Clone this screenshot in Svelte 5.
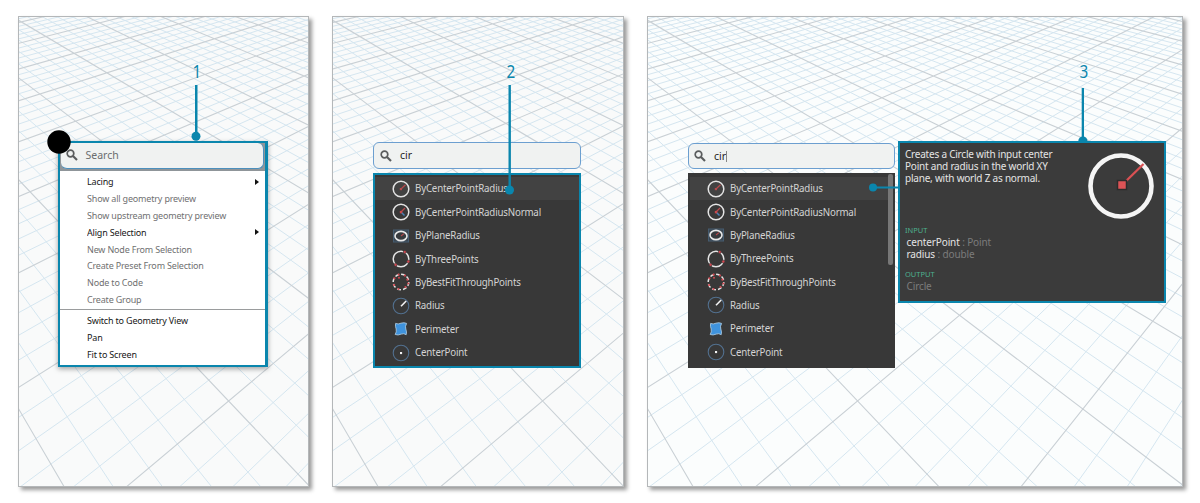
<script>
  // Perspective floor: two families of lines, each meeting at a point on the horizon.
  const horizon = -203, leftX = -347.4, rightX = 910;
  const line = (x, slope) => `M${x} ${horizon}L${(x + 690 * slope).toFixed(1)} ${horizon + 690}`;
  let minor = '', major = '';
  for (let n = -12; n <= 65; n++) {
    const s = n / 5;
    const d = line(leftX, 0.584 + 0.365 * s) + line(rightX, -(0.7955 + 0.394 * s));
    if (n % 5 === 0) major += d; else minor += d;
  }
  const groups = [
    [['Lacing', 1, 1], ['Show all geometry preview', 0, 0], ['Show upstream geometry preview', 0, 0], ['Align Selection', 1, 1],
     ['New Node From Selection', 0, 0], ['Create Preset From Selection', 0, 0], ['Node to Code', 0, 0], ['Create Group', 0, 0]],
    [['Switch to Geometry View', 1, 0], ['Pan', 1, 0], ['Fit to Screen', 1, 0]]
  ];
  const nodes = ['ByCenterPointRadius', 'ByCenterPointRadiusNormal', 'ByPlaneRadius', 'ByThreePoints', 'ByBestFitThroughPoints', 'Radius', 'Perimeter', 'CenterPoint'];
</script>

{#snippet grid()}
  <div class="grid">
    <svg width="540" height="471" viewBox="1 1 540 471">
      <path d={minor} stroke="#d5e6f0" stroke-width="1" fill="none" />
      <path d={major} stroke="#c9d0d5" stroke-width="1.1" fill="none" />
    </svg>
  </div>
{/snippet}

{#snippet lens()}
  <svg class="lens" width="12" height="12" viewBox="0 0 12 12" fill="none" stroke="#5a5c5d">
    <circle cx="4.5" cy="4.5" r="3.3" stroke-width="1.7" />
    <path d="M7 7L11 11" stroke-width="2.1" />
  </svg>
{/snippet}

{#snippet nodeIcon(n)}
  <svg class="icon" width="18" height="18" viewBox="0 0 18 18" fill="none">
    {#if n === 0}
      <circle cx="9" cy="9" r="7.8" stroke="#e4e4e4" stroke-width="1.5" />
      <path d="M9 9L13.5 4.7" stroke="#b8494c" stroke-width="1.2" />
      <rect x="7.8" y="8" width="2.2" height="2.2" fill="#b8494c" />
    {:else if n === 1}
      <circle cx="9" cy="9" r="7.8" stroke="#e4e4e4" stroke-width="1.5" />
      <path d="M9 9L13 5" stroke="#b8494c" stroke-width="1.2" />
      <path d="M9.5 9.5L12.5 12.5" stroke="#4b82b8" stroke-width="1.4" />
      <rect x="7.8" y="7.9" width="2.4" height="2.4" fill="#c9494c" />
    {:else if n === 2}
      <rect x="1.5" y="3" width="15" height="12" fill="#3a4651" stroke="#465c70" stroke-width="1" />
      <ellipse cx="9" cy="9" rx="6" ry="4.6" stroke="#e8e8e8" stroke-width="1.6" fill="#383b3e" />
      <path d="M9 9L12 6.6" stroke="#b8494c" stroke-width="1.1" />
    {:else if n === 3}
      <circle cx="9" cy="9" r="7.8" stroke="#e4e4e4" stroke-width="1.5" />
      <g fill="#d34750" stroke="#383838" stroke-width=".6"><circle cx="12.8" cy="2" r="1.5" /><circle cx="16.3" cy="11.6" r="1.5" /><circle cx="3.6" cy="14.8" r="1.5" /></g>
    {:else if n === 4}
      <circle cx="9" cy="9" r="7.8" stroke="#e4e4e4" stroke-width="1.5" stroke-dasharray="4 2.1" />
      <g fill="#d34750"><circle cx="6.6" cy="1.6" r="1.1" /><circle cx="12.9" cy="2.6" r="1.1" /><circle cx="7" cy="4.8" r="1" /><circle cx="2.4" cy="5.3" r="1.1" /><circle cx="15.4" cy="6.7" r="1.1" /><circle cx="16.3" cy="10.5" r="1.1" /><circle cx="2.1" cy="12" r="1.1" /><circle cx="13.5" cy="14" r="1.1" /><circle cx="6.5" cy="16" r="1.1" /></g>
    {:else if n === 5}
      <circle cx="9" cy="9" r="7.8" stroke="#52708f" stroke-width="1.1" />
      <path d="M9 9.2L14.2 4" stroke="#f2f2f2" stroke-width="1.6" />
    {:else if n === 6}
      <path d="M3.6 3.4Q6.2 4.6 9 3.2Q12 2.2 14.6 3.4Q12.8 6.4 13.8 9Q15 12 14.2 14.7Q11.8 13 9.2 14.1Q6 15.6 3.2 14.5Q4.8 12 4.2 9Q3 6.4 3.6 3.4Z" fill="#3f93dd" stroke="#a6c6df" stroke-width=".9" />
    {:else}
      <circle cx="9" cy="9" r="7.8" stroke="#52708f" stroke-width="1.1" />
      <rect x="8" y="8" width="2.1" height="2.1" fill="#f4f4f4" />
    {/if}
  </svg>
{/snippet}

{#snippet results()}
  {#each nodes as name, n}
    <li class:active={n === 0}>{@render nodeIcon(n)}<span>{name}</span></li>
  {/each}
{/snippet}

<main>
  <section class="panel">
    {@render grid()}
    <div class="context">
      <div class="search flat">{@render lens()}<span class="hint">Search</span></div>
      <div class="menu">
        {#each groups as group}
          <ul>
            {#each group as [label, enabled, more]}
              <li class:enabled={enabled}><span>{label}</span>{#if more}<i></i>{/if}</li>
            {/each}
          </ul>
        {/each}
      </div>
    </div>
    <svg class="marks" width="291" height="471" fill="#0a86ad">
      <circle cx="41" cy="126" r="11.7" fill="#000" />
      <rect x="177" y="69" width="2.5" height="51" /><circle cx="178" cy="120.3" r="4.5" />
    </svg>
    <b class="num n1">1</b>
  </section>

  <section class="panel second">
    {@render grid()}
    <div class="finder">
      <div class="search">{@render lens()}<span>cir</span></div>
      <ul class="results outlined">{@render results()}</ul>
    </div>
    <svg class="marks" width="292" height="471" fill="#0a86ad">
      <rect x="176.5" y="69" width="2.4" height="105" /><circle cx="177.5" cy="174" r="4.5" />
    </svg>
    <b class="num n2">2</b>
  </section>

  <section class="panel third">
    {@render grid()}
    <div class="finder">
      <div class="search">{@render lens()}<span>cir</span><em></em></div>
      <ul class="results">{@render results()}<s></s></ul>
    </div>
    <aside>
      <div class="top">
        <p>Creates a Circle with input center<br />Point and radius in the world XY<br />plane, with world Z as normal.</p>
        <svg width="68" height="68" viewBox="0 0 68 68" fill="none">
          <circle cx="34" cy="34" r="30.5" stroke="#f5f5f5" stroke-width="4.6" />
          <path d="M35 33L56.5 12" stroke="#da5154" stroke-width="2.3" />
          <rect x="30.5" y="28.5" width="9" height="9" fill="#dc5356" stroke="#2c2c2c" stroke-width="1.5" />
        </svg>
      </div>
      <h4>INPUT</h4>
      <div class="port">centerPoint <small>: Point</small></div>
      <div class="port">radius <small>: double</small></div>
      <h4 class="out">OUTPUT</h4>
      <div class="port"><small>Circle</small></div>
    </aside>
    <svg class="marks" width="536" height="471" fill="#0a86ad">
      <rect x="434.7" y="72" width="2.3" height="51" /><path d="M431.3 125a4.6 4.6 0 0 1 9.2 0z" />
      <circle cx="226" cy="171.5" r="4" /><rect x="226" y="170.5" width="26" height="2" />
    </svg>
    <b class="num n3">3</b>
  </section>
</main>

<style>
  :global(body) { margin: 0; background: #fff; }
  main { box-sizing: border-box; width: 1200px; height: 503px; padding: 16px 0 0 18px; display: flex; gap: 23px; overflow: hidden; font: 11px/1 "Noto Sans", sans-serif; }
  ul { list-style: none; margin: 0; padding: 0; }
  .panel { position: relative; box-sizing: border-box; width: 291px; height: 471px; flex: none; border: 1px solid #b4b7b9; background: #f9fafa; box-shadow: 3px 3px 4px rgba(0,0,0,.4); padding: 124px 0 0 39px; }
  .second { width: 292px; padding: 125px 0 0 40px; }
  .third { width: 536px; background: #fbfdfd; padding: 124px 0 0 39.5px; display: flex; gap: 3px; }
  .grid { position: absolute; inset: 0; overflow: hidden; }
  .grid svg { display: block; }
  .marks { position: absolute; left: -1px; top: -1px; }
  .num { position: absolute; top: 44px; width: 20px; text-align: center; font-weight: 400; font-size: 18px; line-height: 20px; color: #0a86ad; transform: scaleX(.85); }
  .n1 { left: 168px; } .n2 { left: 167.5px; } .n3 { left: 425.5px; }
  .context { position: relative; box-sizing: border-box; width: 209.5px; height: 226px; border: 2px solid #0a86ad; border-right-width: 3px; background: #8f9599; box-shadow: 0 2px 5px rgba(0,0,0,.35); }
  .search { position: relative; box-sizing: border-box; height: 27px; width: 208px; border: 1.4px solid #6c9fd0; border-radius: 6px; background: #f0f2f1; display: flex; align-items: center; padding-left: 6px; gap: 8px; font-size: 10.5px; color: #252525; }
  .search.flat { width: 203px; height: 25.5px; margin-left: 1px; padding-left: 5px; border-color: #4c90bd; border-width: 0 1px 1px 0; font-size: 10.5px; }
  .flat .lens { margin-left: -.5px; }
  .hint { color: #6b6d6e; position: relative; top: -.5px; }
  .menu { margin-top: 2.5px; background: #fff; height: 194px; padding-top: 2.6px; box-sizing: border-box; }
  .menu ul + ul { border-top: 1px solid #9a9c9d; margin-top: 1px; padding-top: 2px; }
  .menu li { height: 16.83px; display: flex; align-items: center; justify-content: space-between; padding: 0 5.5px 0 27.4px; color: #6f7071; font-size: 9.5px; white-space: nowrap; letter-spacing: -.18px; }
  .menu span, .results span { transform: scaleX(.945); transform-origin: left; }
  .menu li.enabled { color: #161616; }
  .menu i { border: 3px solid transparent; border-left: 4px solid #111; border-right: 0; }
  .finder { position: relative; width: 208px; }
  .results { position: relative; box-sizing: border-box; margin-top: 4px; height: 195px; background: #383838; padding: 4px 2px 0; }
  .results.outlined { border: 2px solid #0a86ad; padding: 2px 0 0; }
  .results li { height: 23.42px; display: flex; align-items: center; gap: 5px; padding-left: 17px; color: #d4d4d4; font-size: 10.5px; white-space: nowrap; letter-spacing: -.2px; }
  .results span { transform: scaleX(.925); }
  .results li.active { background: #424242; }
  .third .finder { width: 207px; padding-top: 2px; }
  .third .search { width: 207px; height: 26px; padding-left: 5.5px; }
  .third .results { height: 194.5px; }
  .third .results li { height: 23.35px; }
  .third em { width: 1px; height: 11px; background: #888; margin-left: -8.5px; }
  .results s { position: absolute; right: 2px; top: 1px; width: 5px; height: 91px; background: #777; border-radius: 2px; }
  aside { position: relative; box-sizing: border-box; width: 268px; height: 162px; border: 2.5px solid #0a86ad; background: #3b3b3b; color: #e4e4e4; padding: 5px 9px 0 5.5px; font-size: 10px; }
  .top { display: flex; justify-content: space-between; height: 77.5px; }
  p { margin: 0; line-height: 12.2px; white-space: nowrap; letter-spacing: -.22px; }
  .top svg { margin-top: 4px; flex: none; }
  h4 { margin: 0 0 2px; font-weight: 400; font-size: 7.5px; line-height: 8px; color: #4db08f; }
  .out { margin-top: 9.5px; }
  .port { line-height: 12.5px; padding-left: 1.5px; font-size: 10px; letter-spacing: -.12px; }
  .port small { font-size: 10px; color: #7c7c7c; }
</style>
